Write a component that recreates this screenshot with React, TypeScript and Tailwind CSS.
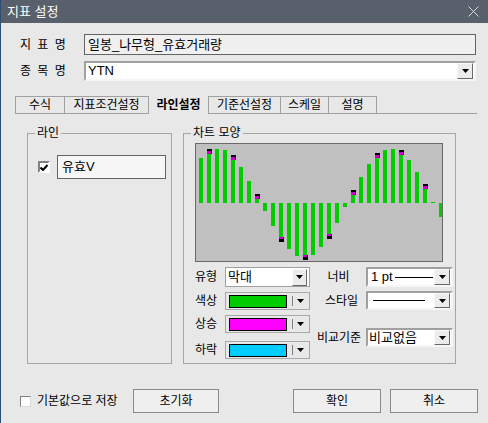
import React from 'react'

const bars: [number, number, boolean][] = [
  [199, 158, false], [207, 154, true], [215, 149, false], [223, 150, false], [231, 160, true],
  [239, 167, false], [247, 181, false], [255, 199, true], [263, 211, false], [271, 226, false],
  [279, 237, true], [287, 249, false], [295, 256, false], [303, 255, true], [311, 255, false],
  [319, 247, false], [327, 234, true], [335, 223, false], [343, 207, false], [351, 195, true],
  [359, 177, false], [367, 164, false], [375, 158, true], [383, 150, false], [391, 149, false],
  [399, 155, true], [407, 160, false], [415, 172, false], [423, 189, true], [431, 202, false],
  [439, 217, false],
]
const ZERO = 203

const Arrow = () => (
  <svg width="7" height="4" viewBox="0 0 7 4">
    <path d="M0 0H7L3.5 4Z" fill="#000" />
  </svg>
)

const DropBtn = ({ className = '' }: { className?: string }) => (
  <div
    className={`flex shrink-0 items-center justify-center border border-t-[#fafafa] border-l-[#fafafa] border-r-[#696969] border-b-[#696969] bg-[#ececec] ${className}`}
  >
    <Arrow />
  </div>
)

const Swatch = ({ color }: { color: string }) => (
  <div className="flex h-[18px] w-[85px] items-center border border-[#a8a8a8] pl-[3px]">
    <div className="h-[13px] w-[58px] border border-black" style={{ backgroundColor: color }} />
    <div className="ml-[5px] h-[10px] w-px bg-[#808080]" />
    <div className="ml-[4px] flex items-center">
      <Arrow />
    </div>
  </div>
)

const GroupBox = ({ title, className, children }: { title: string; className: string; children: React.ReactNode }) => (
  <div className={`relative border border-[#a6a6a6] ${className}`}>
    <span className="absolute -top-[9px] left-[7px] bg-[#e8e8e8] px-[2px] text-[12px] leading-[16px]">{title}</span>
    {children}
  </div>
)

function Chart() {
  return (
    <div className="h-[119px] w-[248px] border border-[#6a6a6a] bg-[#c0c0c0]">
      <svg width="246" height="117" viewBox="196 144 246 117" className="block">
        {bars.map(([x, y, mark]) => {
          const up = y < ZERO
          const top = up ? y : ZERO
          const h = up ? ZERO - y : y - ZERO
          return (
            <g key={x}>
              <rect x={x} y={top} width={4} height={h} fill="#00cc00" />
              {mark && up && (
                <>
                  <rect x={x} y={y - 5} width={5} height={5} fill="#000" />
                  <rect x={x} y={y - 3} width={4} height={3} fill="#cc00cc" />
                </>
              )}
              {mark && !up && (
                <>
                  <rect x={x} y={y} width={5} height={5} fill="#000" />
                  <rect x={x} y={y} width={4} height={2} fill="#cc00cc" />
                </>
              )}
            </g>
          )
        })}
      </svg>
    </div>
  )
}

const tabs = ['수식', '지표조건설정', '라인설정', '기준선설정', '스케일', '설명']
const tabW = ['w-[49px]', 'w-[84px]', 'w-[60px]', 'w-[72px]', 'w-[48px]', 'w-[49px]']

export default function App() {
  return (
    <div className="flex h-[423px] w-[488px] flex-col overflow-hidden border-l border-[#2e4e72] bg-[#e8e8e8] font-['Liberation_Sans','Noto_Sans_CJK_KR',sans-serif] text-[12px] text-black">
      {/* title bar */}
      <div className="flex h-[23px] shrink-0 items-center justify-between bg-[#58616b] pl-[6px] pr-[9px] text-white">
        <span className="text-[13px] leading-[16px]">지표 설정</span>
        <svg width="11" height="11" viewBox="0 0 11 11">
          <path d="M0.5 0.5L10.5 10.5M10.5 0.5L0.5 10.5" stroke="#d8dce0" strokeWidth="1" />
        </svg>
      </div>

      {/* name rows */}
      <div className="ml-[19px] mt-[11px] flex h-[21px] items-center">
        <span className="w-[64px] leading-[14px] [word-spacing:3px]">지 표 명</span>
        <div className="flex h-[21px] w-[392px] items-center border border-[#646464] bg-[#f0f0f0] pl-[3px] text-[13px] leading-[16px]">
          일봉_나무형_유효거래량
        </div>
      </div>
      <div className="ml-[19px] mt-[6px] flex h-[20px] items-center">
        <span className="w-[64px] leading-[14px] [word-spacing:3px]">종 목 명</span>
        <div className="flex h-[20px] w-[392px] items-center border-2 border-t-[#a0a0a0] border-l-[#a0a0a0] border-b-[#f6f6f6] border-r-[#f6f6f6] bg-white pl-[2px] pr-[1px] text-[13px] leading-[16px]">
          <span className="flex-1">YTN</span>
          <DropBtn className="h-[16px] w-[16px]" />
        </div>
      </div>

      {/* tabs */}
      <div className="ml-[14px] mt-[15px] flex h-[18px]">
        {tabs.map((t, i) => (
          <div
            key={t}
            className={`flex h-[18px] items-center justify-center border-l border-[#a0a0a0] leading-[14px] ${tabW[i]} ${
              i === 2 ? 'font-bold' : 'border-t border-b'
            } ${i === 5 ? 'border-r' : ''}`}
          >
            {t}
          </div>
        ))}
        <div className="h-[18px] w-[100px] border-b border-[#a0a0a0]" />
      </div>

      {/* panel */}
      <div className="ml-[26px] mt-[19px] flex">
        <GroupBox title="라인" className="h-[231px] w-[145px]">
          <div className="ml-[10px] mt-[21px] flex items-center">
            <div className="flex h-[12px] w-[12px] items-center justify-center border-2 border-t-[#808080] border-l-[#808080] border-b-white border-r-white bg-white">
              <svg width="8" height="7" viewBox="0 0 8 7">
                <path d="M0.5 3.5L3 6L7.5 1" stroke="#000" strokeWidth="2" fill="none" />
              </svg>
            </div>
            <div className="ml-[7px] flex h-[24px] w-[109px] items-center border border-[#646464] bg-[#f6f6f6] pl-[4px] text-[13px] leading-[16px]">
              유효V
            </div>
          </div>
        </GroupBox>

        <GroupBox title="차트 모양" className="ml-[11px] h-[231px] w-[273px]">
          <div className="ml-[11px] mt-[9px]">
            <Chart />
          </div>
          <div className="ml-[11px] mt-[5px] flex">
            {/* left controls */}
            <div className="flex w-[115px] flex-col">
              <div className="flex h-[20px] items-center">
                <span className="w-[30px] leading-[14px]">유형</span>
                <div className="flex h-[20px] w-[85px] items-center border border-[#a0a0a0] bg-white pl-[2px] pr-[2px] text-[13px] leading-[16px]">
                  <span className="flex-1">막대</span>
                  <DropBtn className="h-[17px] w-[15px]" />
                </div>
              </div>
              <div className="mt-[5px] flex h-[18px] items-center">
                <span className="w-[30px] leading-[14px]">색상</span>
                <Swatch color="#00cc00" />
              </div>
              <div className="mt-[5px] flex h-[18px] items-center">
                <span className="w-[30px] leading-[14px]">상승</span>
                <Swatch color="#ff00ff" />
              </div>
              <div className="mt-[8px] flex h-[18px] items-center">
                <span className="w-[30px] leading-[14px]">하락</span>
                <Swatch color="#00ccff" />
              </div>
            </div>

            {/* right controls */}
            <div className="ml-[7px] flex flex-col">
              <div className="flex h-[20px] items-center">
                <span className="w-[49px] pr-[6px] text-center leading-[14px]">너비</span>
                <div className="flex h-[20px] w-[87px] items-center border-2 border-t-[#a0a0a0] border-l-[#a0a0a0] border-b-[#f6f6f6] border-r-[#f6f6f6] bg-white pl-[3px] pr-px text-[13px] leading-[16px]">
                  <span>1 pt</span>
                  <div className="ml-[2px] h-px w-[38px] bg-black" />
                  <div className="flex-1" />
                  <DropBtn className="h-[16px] w-[16px]" />
                </div>
              </div>
              <div className="mt-[4px] flex h-[19px] items-center">
                <span className="w-[49px] text-center leading-[14px]">스타일</span>
                <div className="flex h-[19px] w-[87px] items-center border-2 border-t-[#a0a0a0] border-l-[#a0a0a0] border-b-[#f6f6f6] border-r-[#f6f6f6] bg-white pl-[5px] pr-px">
                  <div className="h-px w-[52px] bg-black" />
                  <div className="flex-1" />
                  <DropBtn className="h-[15px] w-[16px]" />
                </div>
              </div>
              <div className="mt-[18px] flex h-[19px] items-center">
                <span className="w-[49px] leading-[14px]">비교기준</span>
                <div className="flex h-[19px] w-[87px] items-center border-2 border-t-[#a0a0a0] border-l-[#a0a0a0] border-b-[#f6f6f6] border-r-[#f6f6f6] bg-white pl-px pr-px text-[13px] leading-[16px]">
                  <span className="flex-1">비교없음</span>
                  <DropBtn className="h-[15px] w-[16px]" />
                </div>
              </div>
            </div>
          </div>
        </GroupBox>
      </div>

      {/* bottom row */}
      <div className="ml-[19px] mt-[25px] flex h-[24px] items-center">
        <div className="h-[11px] w-[11px] border border-t-[#808080] border-l-[#808080] border-b-[#dcdcdc] border-r-[#dcdcdc] bg-white" />
        <span className="w-[102px] pl-[6px] leading-[14px]">기본값으로 저장</span>
        <button className="flex h-[24px] w-[86px] items-center justify-center border border-[#8a8a8a] bg-[#efefef] leading-[14px]">초기화</button>
        <button className="ml-[74px] flex h-[24px] w-[88px] items-center justify-center border border-[#8a8a8a] bg-[#efefef] leading-[14px]">확인</button>
        <button className="ml-[9px] flex h-[24px] w-[88px] items-center justify-center border border-[#8a8a8a] bg-[#efefef] leading-[14px]">취소</button>
      </div>
    </div>
  )
}
